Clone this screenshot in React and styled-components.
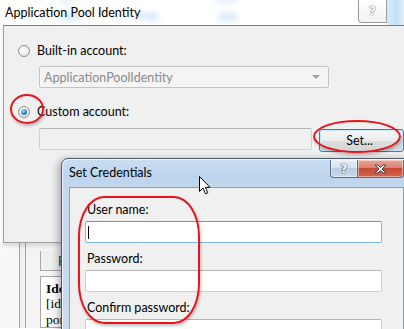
import React from 'react';
import styled, { createGlobalStyle } from 'styled-components';

const GlobalStyle = createGlobalStyle`
  html, body { margin: 0; padding: 0; background: #ffffff; }
  body { font-family: "Lato", "Noto Sans", sans-serif; font-size: 12px; color: #000; }
`;

const Screen = styled.div`
  position: relative;
  width: 404px;
  height: 329px;
  overflow: hidden;
  background: #ffffff;
`;

/* ---------- main window (Application Pool Identity) ---------- */

const TitleBar = styled.div`
  position: relative;
  height: 25px;
  display: flex;
  align-items: center;
  background: #ffffff;
`;

const Blob = styled.span`
  position: absolute;
  background: #d6e9fa;
  border-radius: 6px;
  filter: blur(3px);
`;

const WindowTitle = styled.div`
  position: relative;
  padding-left: 5px;
  font-size: 12.5px;
  color: #000;
`;

const TitleButtons = styled.div`
  position: relative;
  margin-left: auto;
  align-self: flex-start;
  display: flex;
  height: 25px;
`;

const HelpBtn = styled.div`
  width: 27px;
  height: 23px;
  margin-top: -1px;
  border: 1px solid #9a9a9a;
  border-top: none;
  border-radius: 0 0 0 4px;
  background: linear-gradient(#ffffff, #f3f3f3);
  display: flex;
  align-items: center;
  justify-content: center;
  font-family: "DejaVu Sans", sans-serif;
  font-size: 12px;
  font-weight: bold;
  color: #ffffff;
  text-shadow: 0 0 1px #555, 0 0 1px #555;
`;

const Glass = styled.div`
  width: 17px;
  background: linear-gradient(90deg, #d6ebfb, #c4e1f8 60%, #e4f2fc);
`;

const Panel = styled.div`
  margin-left: 3px;
  height: 218px;
  border-top: 1px solid #7c7c7c;
  border-left: 1px solid #a0a0a0;
  border-bottom: 1px solid #a0a0a0;
  background: #f0f0f0;
  box-shadow: 0 3px 4px rgba(0, 0, 0, 0.12);
  padding: 16px 0 0 14px;
  box-sizing: border-box;
  position: relative;
  z-index: 1;
`;

const RadioRow = styled.div`
  display: flex;
  align-items: center;
  gap: 7px;
  height: 17px;
  margin-top: ${p => p.$top || 0}px;
`;

const Radio = styled.span`
  width: 10px;
  height: 10px;
  border-radius: 50%;
  border: 1px solid #8e8f8f;
  background: radial-gradient(circle at 40% 35%, #ffffff, #e1e1e1);
  display: flex;
  align-items: center;
  justify-content: center;
  &::after {
    content: '';
    display: ${p => (p.$checked ? 'block' : 'none')};
    width: 6px;
    height: 6px;
    border-radius: 50%;
    background: radial-gradient(circle at 40% 35%, #9fdcff, #1f7ac9 60%, #0a4f8f);
  }
`;

const Label = styled.span`
  font-size: 12.5px;
  line-height: 16px;
  color: #000;
`;

const Combo = styled.div`
  margin: 7px 0 0 21px;
  width: 290px;
  height: 22px;
  box-sizing: border-box;
  border: 1px solid #c4c4c4;
  border-radius: 2px;
  background: #f4f4f4;
  display: flex;
  align-items: center;
  padding: 0 8px 0 4px;
  color: #8a8a8a;
  font-size: 12.5px;
`;

const ComboArrow = styled.span`
  margin-left: auto;
  width: 0;
  height: 0;
  border-left: 4px solid transparent;
  border-right: 4px solid transparent;
  border-top: 4px solid #a0a0a0;
`;

const FieldRow = styled.div`
  display: flex;
  align-items: flex-start;
  gap: 7px;
  margin: 8px 0 0 21px;
`;

const Field = styled.div`
  width: ${p => p.$w}px;
  height: 22px;
  box-sizing: border-box;
  border: 1px solid ${p => (p.$focus ? '#7eb4ea' : '#cfcfcf')};
  border-top-color: ${p => (p.$focus ? '#569de5' : '#b5b5b5')};
  border-radius: 2px;
  background: ${p => (p.$plain ? '#f0f0f0' : '#ffffff')};
  position: relative;
`;

const Caret = styled.span`
  position: absolute;
  left: 2px;
  top: 4px;
  width: 1px;
  height: 13px;
  background: #000;
`;

const SetButton = styled.div`
  width: 86px;
  height: 23px;
  margin-top: 1px;
  box-sizing: border-box;
  border: 1px solid #3c7fb1;
  border-radius: 3px;
  box-shadow: inset 0 0 0 1px #c8e8fa;
  background: linear-gradient(#f6f6f6 0%, #ececec 50%, #dedede 51%, #d4d4d4 100%);
  display: flex;
  align-items: center;
  justify-content: center;
  padding-right: 4px;
  font-size: 12.5px;
`;

/* ---------- window behind (IIS manager) ---------- */

const BackArea = styled.div`
  height: 85px;
  display: flex;
  background: #f4f4f4;
`;

const BackRail = styled.div`
  width: 19px;
  background: #f8f8f8;
  border-right: 1px solid #a3a3a3;
`;

const BackGap = styled.div`
  width: 5px;
  border-right: 1px solid #a3a3a3;
  background: #f0f0f0;
`;

const BackColumn = styled.div`
  padding: 8px 0 0 14px;
  display: flex;
  flex-direction: column;
  gap: 5px;
`;

const BackTab = styled.div`
  width: 60px;
  height: 25px;
  box-sizing: border-box;
  border: 1px solid #a8a8a8;
  border-top: none;
  background: #f0f0f0;
  padding: 3px 0 0 17px;
  font-size: 12.5px;
  color: #333;
`;

const BackBox = styled.div`
  width: 60px;
  height: 60px;
  box-sizing: border-box;
  border: 1px solid #a8a8a8;
  background: #ffffff;
  padding: 4px 0 0 5px;
  font-family: "Liberation Serif", serif;
  font-size: 13.5px;
  line-height: 15.5px;
`;

/* ---------- Set Credentials dialog ---------- */

const Dialog = styled.div`
  position: absolute;
  left: 61px;
  top: 158px;
  width: 350px;
  height: 190px;
  box-sizing: border-box;
  border: 1px solid #4d5966;
  border-radius: 7px 7px 0 0;
  background: linear-gradient(#c9ddf1 0px, #bcd4ec 18px, #c4d8ed 30px, #cbdcee 100%);
  box-shadow: -2px 2px 8px rgba(0, 0, 0, 0.35), inset 1px 1px 0 rgba(255, 255, 255, 0.7);
  padding: 0 6px 0 7px;
  z-index: 2;
`;

const DialogBar = styled.div`
  height: 28px;
  display: flex;
  align-items: flex-start;
`;

const DialogTitle = styled.div`
  padding: 6px 0 0 0;
  font-size: 12.5px;
  color: #000;
`;

const CaptionButtons = styled.div`
  margin-left: auto;
  margin-top: 1px;
  display: flex;
  height: 18px;
`;

const CapBtn = styled.div`
  width: ${p => p.$w}px;
  height: 18px;
  box-sizing: border-box;
  border: 1px solid #5d6c7c;
  border-top: none;
  border-left: ${p => (p.$close ? 'none' : '1px solid #5d6c7c')};
  border-radius: ${p => (p.$close ? '0 0 4px 0' : '0 0 0 4px')};
  background: ${p =>
    p.$close
      ? 'linear-gradient(#e9a797 0%, #d98170 45%, #c54a34 50%, #d2674c 100%)'
      : 'linear-gradient(#e6eef7 0%, #d3e1ef 45%, #b8cce1 50%, #c8daec 100%)'};
  box-shadow: inset 0 0 0 1px rgba(255, 255, 255, 0.45);
  display: flex;
  align-items: center;
  justify-content: center;
  font-family: "DejaVu Sans", sans-serif;
  font-weight: bold;
  font-size: 12px;
  color: #ffffff;
  text-shadow: 0 0 1px #3a4450, 0 0 1px #3a4450, 0 0 1px #3a4450;
`;

const DialogBody = styled.div`
  height: 160px;
  box-sizing: border-box;
  border: 1px solid #8f9eae;
  background: #f0f0f0;
  padding: 14px 0 0 15px;
`;

const FieldLabel = styled.div`
  margin: ${p => (p.$first ? 0 : 8)}px 0 3px 2px;
  font-size: 12.5px;
  line-height: 16px;
`;

/* ---------- annotations ---------- */

const Ring = styled.div`
  position: absolute;
  left: ${p => p.$x}px;
  top: ${p => p.$y}px;
  width: ${p => p.$w}px;
  height: ${p => p.$h}px;
  border: 2px solid #e8131b;
  border-radius: ${p => p.$r || '50%'};
  box-sizing: border-box;
  box-shadow: 1px 2px 3px rgba(0, 0, 0, 0.25);
  z-index: 3;
  pointer-events: none;
`;

const Cursor = styled.svg`
  position: absolute;
  left: 199px;
  top: 176px;
  z-index: 4;
`;

const App = () => (
  <Screen>
    <GlobalStyle />
    <TitleBar>
      <Blob style={{ left: 60, top: -3, width: 14, height: 5 }} />
      <Blob style={{ left: 62, top: 13, width: 20, height: 7 }} />
      <Blob style={{ left: 134, top: 13, width: 22, height: 7 }} />
      <Blob style={{ left: 150, top: 14, width: 8, height: 6 }} />
      <Blob style={{ left: 216, top: -3, width: 22, height: 5 }} />
      <Blob style={{ left: 218, top: 13, width: 20, height: 8 }} />
      <WindowTitle>Application Pool Identity</WindowTitle>
      <TitleButtons>
        <HelpBtn>?</HelpBtn>
        <Glass />
      </TitleButtons>
    </TitleBar>

    <Panel>
      <RadioRow>
        <Radio />
        <Label>Built-in account:</Label>
      </RadioRow>
      <Combo>
        ApplicationPoolIdentity
        <ComboArrow />
      </Combo>
      <RadioRow $top={15}>
        <Radio $checked />
        <Label>Custom account:</Label>
      </RadioRow>
      <FieldRow>
        <Field $w={277} $plain />
        <SetButton>Set...</SetButton>
      </FieldRow>
    </Panel>

    <BackArea>
      <BackRail />
      <BackGap />
      <BackColumn>
        <BackTab>P</BackTab>
        <BackBox>
          <b>Ide</b>
          <br />
          [ide
          <br />
          por
        </BackBox>
      </BackColumn>
    </BackArea>

    <Dialog>
      <DialogBar>
        <DialogTitle>Set Credentials</DialogTitle>
        <CaptionButtons>
          <CapBtn $w={28}>?</CapBtn>
          <CapBtn $w={46} $close>
            <svg width="13" height="10" viewBox="0 0 13 10">
              <path
                d="M1 1 H4 L6.5 3.5 L9 1 H12 L8 5 L12 9 H9 L6.5 6.5 L4 9 H1 L5 5 Z"
                fill="#ffffff"
                stroke="#3a4450"
                strokeWidth="1"
                strokeLinejoin="round"
              />
            </svg>
          </CapBtn>
        </CaptionButtons>
      </DialogBar>
      <DialogBody>
        <FieldLabel $first>User name:</FieldLabel>
        <Field $w={297} $focus>
          <Caret />
        </Field>
        <FieldLabel>Password:</FieldLabel>
        <Field $w={297} />
        <FieldLabel>Confirm password:</FieldLabel>
        <Field $w={297} />
      </DialogBody>
    </Dialog>

    <Ring $x={10} $y={94} $w={34} $h={30} />
    <Ring $x={313} $y={120} $w={88} $h={33} />
    <Ring $x={78} $y={196} $w={122} $h={128} $r="26px / 40px" />

    <Cursor width="12" height="19" viewBox="0 0 12 19">
      <path
        d="M0.5 0.5 L0.5 15.5 L4 12 L6.5 17.8 L8.8 16.8 L6.4 11.3 L11 11.3 Z"
        fill="#ffffff"
        stroke="#000000"
        strokeWidth="1"
        strokeLinejoin="round"
      />
    </Cursor>
  </Screen>
);

export default App;
